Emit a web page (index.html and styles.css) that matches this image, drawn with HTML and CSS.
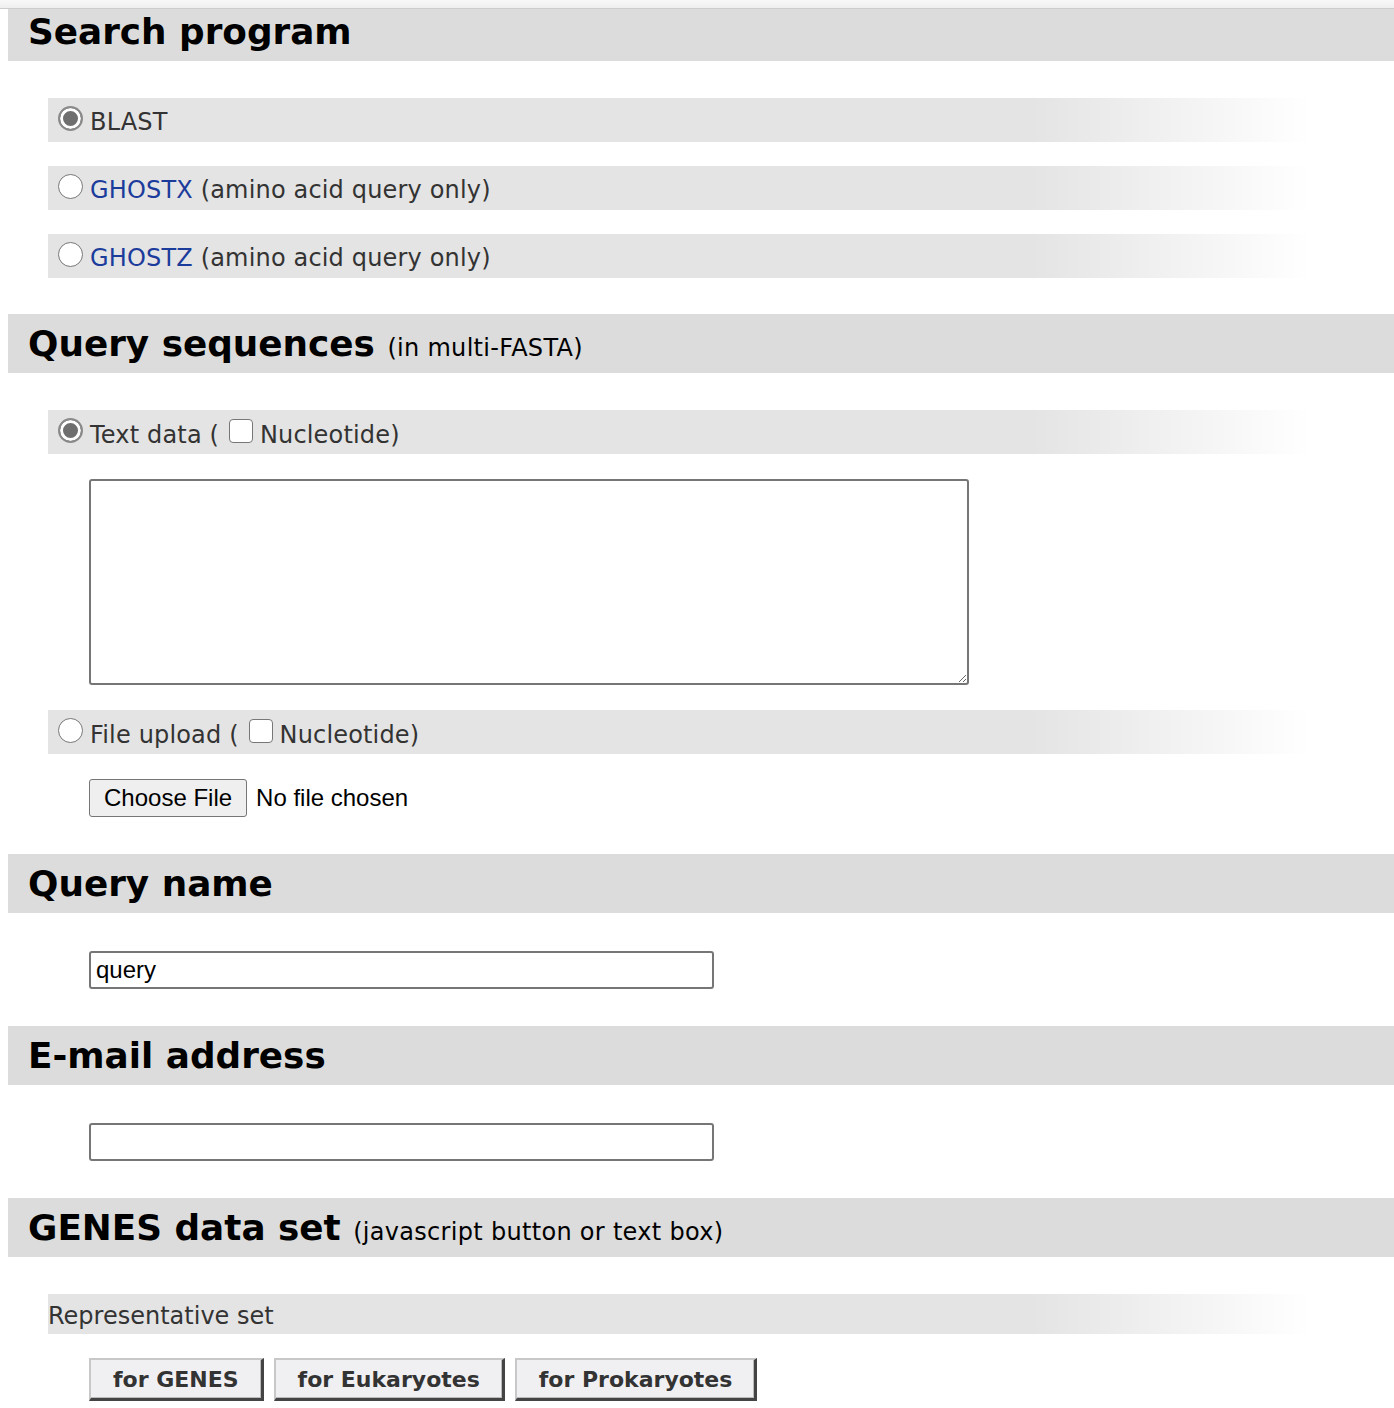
FILE: index.html
```html
<!DOCTYPE html>
<html lang="en">
<head>
<meta charset="utf-8">
<title>Search program</title>
<link rel="stylesheet" href="styles.css">
</head>
<body>
<div class="topbar"></div>
<main class="page">
  <section class="sec">
    <h2 class="sec-head">Search program</h2>
    <div class="sec-body sec-body--first">
      <div class="opt-row">
        <input type="radio" class="radio" name="prog" checked>
        <span class="opt-label">BLAST</span>
      </div>
      <div class="opt-row">
        <input type="radio" class="radio" name="prog">
        <span class="opt-label"><a class="lnk" href="#">GHOSTX</a> (amino acid query only)</span>
      </div>
      <div class="opt-row">
        <input type="radio" class="radio" name="prog">
        <span class="opt-label"><a class="lnk" href="#">GHOSTZ</a> (amino acid query only)</span>
      </div>
    </div>
  </section>

  <section class="sec">
    <h2 class="sec-head">Query sequences <small class="sub">(in multi-FASTA)</small></h2>
    <div class="sec-body sec-body--wide">
      <div class="opt-row">
        <input type="radio" class="radio" name="src" checked>
        <span class="opt-label">Text data ( <input type="checkbox" class="check">Nucleotide)</span>
      </div>
      <textarea class="seq-area"></textarea>
      <div class="opt-row">
        <input type="radio" class="radio" name="src">
        <span class="opt-label">File upload ( <input type="checkbox" class="check">Nucleotide)</span>
      </div>
      <input type="file" class="file-in">
    </div>
  </section>

  <section class="sec">
    <h2 class="sec-head">Query name</h2>
    <div class="sec-body sec-body--input">
      <input type="text" class="text-in" value="query">
    </div>
  </section>

  <section class="sec">
    <h2 class="sec-head">E-mail address</h2>
    <div class="sec-body sec-body--input">
      <input type="text" class="text-in" value="">
    </div>
  </section>

  <section class="sec">
    <h2 class="sec-head">GENES data set <small class="sub">(javascript button or text box)</small></h2>
    <div class="sec-body">
      <div class="opt-row opt-row--plain"><span class="opt-label opt-label--plain">Representative set</span></div>
      <div class="btn-row">
        <button class="set-btn" type="button">for GENES</button>
        <button class="set-btn" type="button">for Eukaryotes</button>
        <button class="set-btn" type="button">for Prokaryotes</button>
      </div>
    </div>
  </section>
</main>
</body>
</html>
```

FILE: styles.css
```css
html, body {
  margin: 0;
  padding: 0;
  background: #fff;
}

body {
  font-family: "DejaVu Sans", Verdana, sans-serif;
  color: #333;
  overflow: hidden;
}

.topbar {
  position: fixed;
  top: 0;
  left: 0;
  right: 0;
  height: 8px;
  background: linear-gradient(to bottom, #f8f8f8, #eeeeee);
  border-bottom: 1px solid #cccccc;
  z-index: 2;
}

.page {
  padding: 2px 0 0 8px;
}

.sec-head {
  margin: 0;
  height: 59px;
  line-height: 59px;
  padding-left: 20px;
  background: #dcdcdc;
  color: #000;
  font-size: 35.8px;
  font-weight: bold;
  white-space: nowrap;
}

.sub {
  font-size: 24px;
  font-weight: normal;
  margin-left: 0;
  letter-spacing: 0.3px;
}

.sec-body {
  display: flex;
  flex-direction: column;
  align-items: flex-start;
  gap: 24px;
  padding: 37px 0 37px 0;
}

.sec-body--first {
  padding-bottom: 36px;
}

.sec-body--wide {
  gap: 25px;
}

.sec-body--input {
  padding: 38px 0 37px 0;
}

.opt-row {
  box-sizing: border-box;
  margin-left: 40px;
  width: 1262px;
  height: 44px;
  display: flex;
  align-items: center;
  background: linear-gradient(to right, #e4e4e4 0%, #e4e4e4 78%, #ffffff 100%);
  font-size: 24px;
  color: #333;
}

.opt-row--plain {
  height: 40px;
  padding-left: 0;
}

.opt-label {
  white-space: nowrap;
  padding-top: 4px;
  letter-spacing: 0.17px;
}

.opt-label--plain {
  letter-spacing: 0;
}

.lnk {
  color: #1c3c9c;
  text-decoration: none;
}

.radio {
  appearance: none;
  -webkit-appearance: none;
  box-sizing: border-box;
  width: 25px;
  height: 25px;
  margin: -3px 7px 0 10px;
  border: 1.5px solid #777;
  border-radius: 50%;
  background: #fff;
  flex: none;
}

.radio:checked {
  border: 2px solid #8a8a8a;
  background: #6f6f6f;
  box-shadow: inset 0 0 0 3px #fff;
}

.check {
  appearance: none;
  -webkit-appearance: none;
  box-sizing: border-box;
  width: 24px;
  height: 24px;
  margin: 0 7px 0 2px;
  border: 1.5px solid #777;
  border-radius: 4px;
  background: #fff;
  vertical-align: 0;
}

.seq-area {
  box-sizing: border-box;
  display: block;
  margin: 0 0 0 81px;
  width: 880px;
  height: 206px;
  border: 2px solid #767676;
  border-radius: 3px;
  background: #fff;
}

.file-in {
  display: block;
  margin-left: 81px;
  font-family: "Liberation Sans", Arial, sans-serif;
  font-size: 24px;
  color: #000;
}

.file-in::file-selector-button {
  box-sizing: border-box;
  height: 38px;
  padding: 0 14px;
  margin-right: 9px;
  border: 1px solid #767676;
  border-radius: 3px;
  background: #efefef;
  font-family: "Liberation Sans", Arial, sans-serif;
  font-size: 24px;
  color: #000;
}

.text-in {
  box-sizing: border-box;
  display: block;
  margin-left: 81px;
  width: 625px;
  height: 38px;
  padding: 0 5px;
  border: 2px solid #767676;
  border-radius: 3px;
  font-family: "Liberation Sans", Arial, sans-serif;
  font-size: 24px;
  color: #000;
  background: #fff;
}

.btn-row {
  display: flex;
  gap: 10px;
  margin-left: 81px;
}

.set-btn {
  box-sizing: border-box;
  height: 43px;
  padding: 0 22px;
  font-family: "DejaVu Sans", Verdana, sans-serif;
  font-size: 22px;
  font-weight: bold;
  color: #333;
  background: #f0f0f3;
  border-style: solid;
  border-width: 2px 3px 3px 2px;
  border-color: #c8c8c8 #444 #444 #c8c8c8;
  box-shadow: inset -1px -1px 0 #bbb;
  border-radius: 0;
}
```
